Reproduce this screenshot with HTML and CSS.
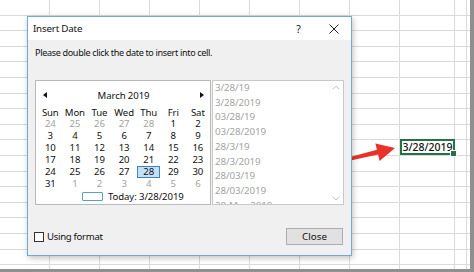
FILE: index.html
```html
<!DOCTYPE html>
<html lang="en">

<head>
    <meta charset="UTF-8">
    <title>Insert Date</title>
    <link rel="stylesheet" href="styles.css">
</head>

<body>
    <div class="screen">
        <div class="sheet">
            <div class="active-cell">3/28/2019<span class="handle"></span></div>
        </div>

        <!-- red pointer from dialog to cell -->
        <svg class="pointer" width="470" height="269" viewBox="0 0 470 269">
            <polygon points="331.8,162 376.9,149.8 375.4,143.4 395,148 379.6,161 378.1,154.6 332.2,164.4" fill="#e8322a" />
        </svg>

        <div class="dialog">
            <div class="titlebar">
                <span class="title">Insert Date</span>
                <span class="caption-btn">?</span>
                <span class="caption-btn">
                    <svg width="10" height="10" viewBox="0 0 10 10">
                        <path d="M0.5 0.5 L9.5 9.5 M9.5 0.5 L0.5 9.5" stroke="#222" stroke-width="1" fill="none" />
                    </svg>
                </span>
            </div>
            <div class="dialog-body">
                <p class="hint">Please double click the date to insert into cell.</p>
                <div class="panes">
                    <div class="calendar">
                        <div class="month-row">
                            <span class="arrow arrow-left"></span>
                            <span>March 2019</span>
                            <span class="arrow arrow-right"></span>
                        </div>
                        <div class="days">
                            <span class="day-name">Sun</span>
                            <span class="day-name">Mon</span>
                            <span class="day-name">Tue</span>
                            <span class="day-name">Wed</span>
                            <span class="day-name">Thu</span>
                            <span class="day-name">Fri</span>
                            <span class="day-name">Sat</span>

                            <span class="other">24</span><span class="other">25</span><span class="other">26</span><span class="other">27</span><span class="other">28</span><span>1</span><span>2</span>
                            <span>3</span><span>4</span><span>5</span><span>6</span><span>7</span><span>8</span><span>9</span>
                            <span>10</span><span>11</span><span>12</span><span>13</span><span>14</span><span>15</span><span>16</span>
                            <span>17</span><span>18</span><span>19</span><span>20</span><span>21</span><span>22</span><span>23</span>
                            <span>24</span><span>25</span><span>26</span><span>27</span><span class="selected">28</span><span>29</span><span>30</span>
                            <span>31</span><span class="other">1</span><span class="other">2</span><span class="other">3</span><span class="other">4</span><span class="other">5</span><span class="other">6</span>
                        </div>
                        <div class="today">
                            <span class="today-box"></span>
                            <span>Today: 3/28/2019</span>
                        </div>
                    </div>
                    <div class="formats">
                        <ul class="format-list">
                            <li>3/28/19</li>
                            <li>3/28/2019</li>
                            <li>03/28/19</li>
                            <li>03/28/2019</li>
                            <li>28/3/19</li>
                            <li>28/3/2019</li>
                            <li>28/03/19</li>
                            <li>28/03/2019</li>
                            <li>28-Mar-2019</li>
                        </ul>
                        <div class="scrollbar">
                            <svg width="8" height="5" viewBox="0 0 8 5">
                                <path d="M0.5 4.5 L4 1 L7.5 4.5" stroke="#c4c4c4" fill="none" />
                            </svg>
                            <svg width="8" height="5" viewBox="0 0 8 5">
                                <path d="M0.5 0.5 L4 4 L7.5 0.5" stroke="#c4c4c4" fill="none" />
                            </svg>
                        </div>
                    </div>
                </div>
                <div class="footer">
                    <label class="option"><span class="checkbox"></span>Using format</label>
                    <button class="close-btn">Close</button>
                </div>
            </div>
        </div>
    </div>
</body>

</html>
```

FILE: styles.css
```css
body {
    margin: 0;
    background-color: #8f8f8f;
    font-family: "Noto Sans", "Open Sans", sans-serif;
}

.screen {
    position: relative;
    width: 470px;
    height: 269px;
    overflow: hidden;
    background-color: #fff;
}

.sheet {
    display: grid;
    grid-template-columns: repeat(8, 50px) 55px 12px;
    grid-template-rows: 15px repeat(16, 15.6px);
    height: 100%;
    background:
        linear-gradient(to right, transparent 454px, #dadada 454px 455px, transparent 455px 466px, #dadada 466px 467px, transparent 467px),
        repeating-linear-gradient(to right, transparent 0 49px, #dadada 49px 50px) 0 0 / 400px 100% no-repeat,
        repeating-linear-gradient(to bottom, transparent 0 14.6px, #dadada 14.6px 15.6px);
}

.active-cell {
    position: relative;
    grid-column: 9;
    grid-row: 10;
    margin: -1px 0 0 0;
    border: 2px solid #217346;
    background-color: #fff;
    font-size: 10.5px;
    font-weight: 500;
    line-height: 13px;
    text-align: center;
    color: #111;
}

.handle {
    position: absolute;
    right: -4px;
    bottom: -4px;
    width: 5px;
    height: 5px;
    background-color: #217346;
    border: 1px solid #fff;
}

.pointer {
    position: absolute;
    left: 0;
    top: 0;
}

.dialog {
    position: absolute;
    left: 27px;
    top: 16px;
    width: 325px;
    height: 240px;
    box-sizing: border-box;
    border: 1px solid #74a7da;
    background-color: #f0f0f0;
    box-shadow: 1px 2px 6px rgba(0, 0, 0, 0.25);
    font-size: 9.6px;
    color: #111;
    display: flex;
    flex-direction: column;
}

.titlebar {
    display: flex;
    align-items: center;
    height: 23px;
    background-color: #fff;
}

.title {
    flex: 1;
    padding-left: 5px;
    font-size: 9.8px;
    letter-spacing: -0.2px;
}

.caption-btn {
    display: flex;
    justify-content: center;
    align-items: center;
    width: 35px;
    height: 23px;
    font-size: 10.5px;
}

.dialog-body {
    flex: 1;
    padding: 5px 7px 0 7px;
}

.hint {
    margin: 0;
    font-size: 9.1px;
    letter-spacing: -0.35px;
    line-height: 16px;
}

.panes {
    display: flex;
    gap: 1px;
    height: 125px;
    margin-top: 19px;
}

.calendar {
    box-sizing: border-box;
    width: 176px;
    padding: 6px 0 0 2px;
    border: 1px solid #b9b9b9;
    background-color: #fff;
}

.month-row {
    display: flex;
    justify-content: space-between;
    align-items: center;
    height: 16px;
    padding: 0 6px 0 5px;
    letter-spacing: -0.1px;
}

.arrow {
    width: 0;
    height: 0;
    border-top: 3px solid transparent;
    border-bottom: 3px solid transparent;
}

.arrow-left {
    border-right: 4px solid #111;
}

.arrow-right {
    border-left: 4px solid #111;
}

.days {
    display: grid;
    grid-template-columns: repeat(7, 24.6px);
    grid-auto-rows: 11.9px;
    margin-top: 3.5px;
    line-height: 11.9px;
    letter-spacing: -0.1px;
    text-align: center;
}

.other {
    color: #a3a3a3;
}

.selected {
    box-sizing: border-box;
    width: 23px;
    justify-self: center;
    border: 1px solid #3d83c4;
    background-color: #c4e0f7;
    line-height: 10px;
}

.today {
    display: flex;
    align-items: center;
    gap: 5px;
    height: 11px;
    margin: 1px 0 0 44px;
    letter-spacing: -0.1px;
}

.today-box {
    box-sizing: border-box;
    width: 21px;
    height: 9px;
    border: 1px solid #5b9bd5;
    border-radius: 1px;
}

.formats {
    display: flex;
    flex: 1;
    border: 1px solid #c9c9c9;
    background-color: #fff;
    overflow: hidden;
}

.format-list {
    flex: 1;
    margin: 0;
    padding: 0 0 0 2px;
    list-style: none;
    font-size: 9.8px;
    letter-spacing: -0.1px;
    line-height: 14.7px;
    color: #a4a4a4;
}

.scrollbar {
    display: flex;
    flex-direction: column;
    justify-content: space-between;
    align-items: center;
    width: 15px;
    padding: 4px 0 3px 0;
}

.footer {
    display: flex;
    justify-content: space-between;
    align-items: center;
    height: 17px;
    margin-top: 23px;
}

.option {
    display: flex;
    align-items: center;
    gap: 3px;
    letter-spacing: -0.3px;
}

.checkbox {
    box-sizing: border-box;
    width: 10px;
    height: 10px;
    margin-left: -1px;
    border: 1px solid #333;
    background-color: #fff;
}

.close-btn {
    width: 57px;
    height: 17px;
    margin-right: 1px;
    padding: 0;
    border: 1px solid #adadad;
    background-color: #e1e1e1;
    font-family: "Noto Sans", "Open Sans", sans-serif;
    font-size: 9.8px;
    color: #111;
}
```
